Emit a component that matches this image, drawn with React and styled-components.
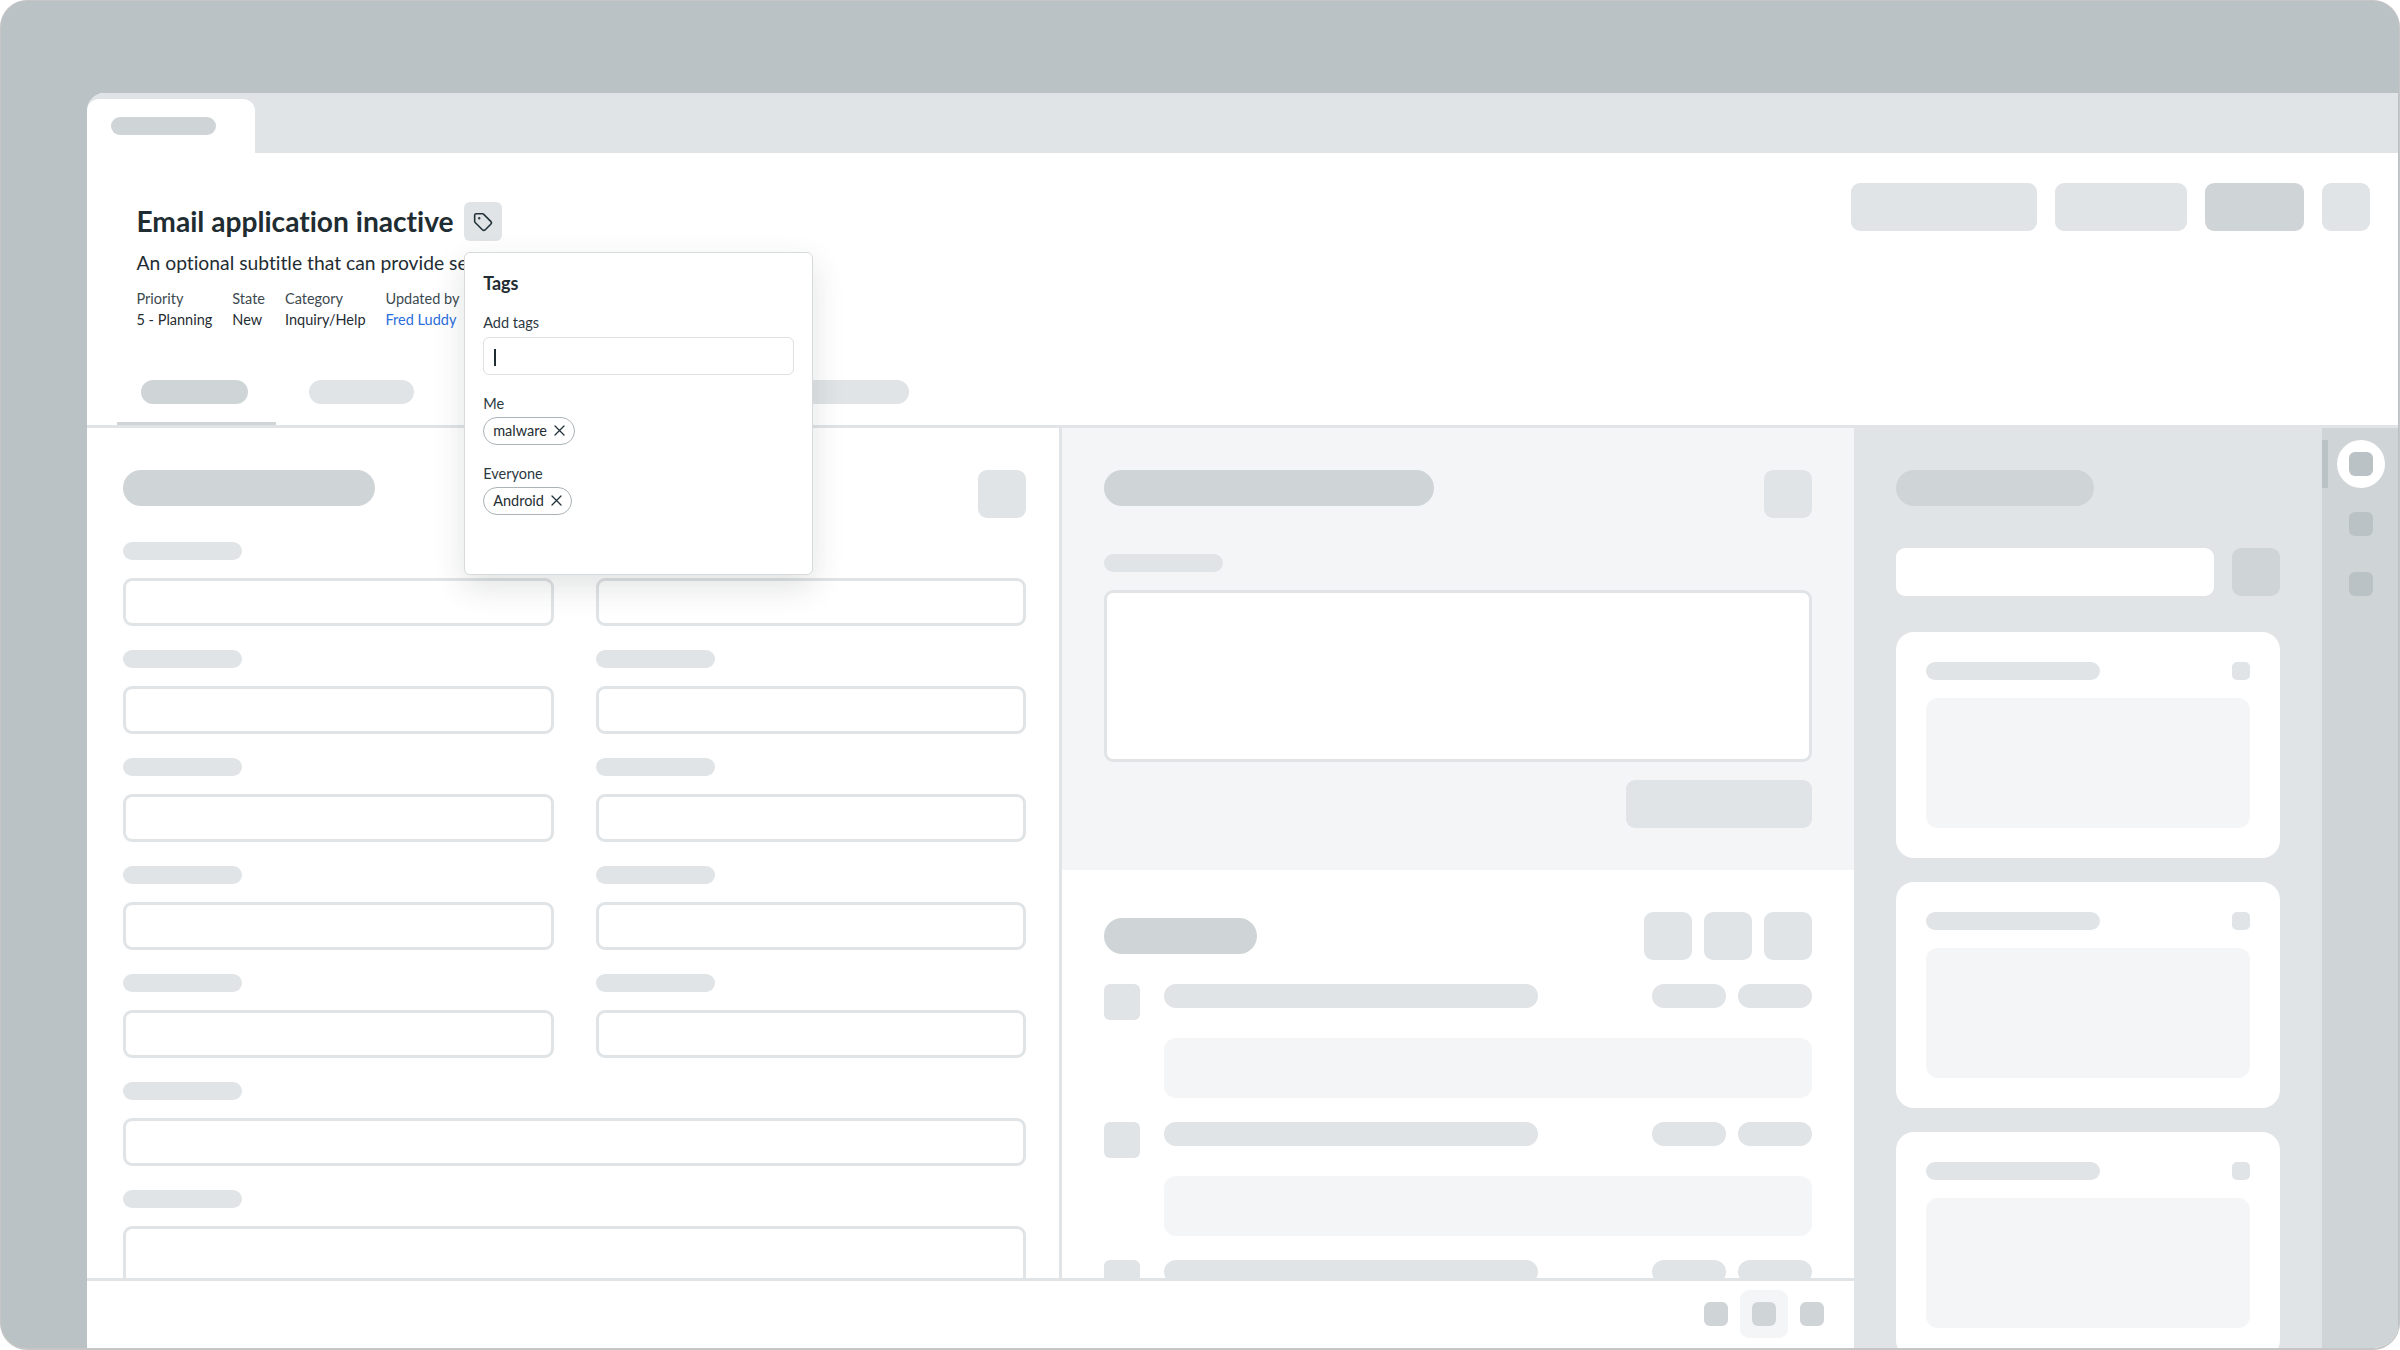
import React from "react";
import styled, { createGlobalStyle } from "styled-components";
import { Tag } from "lucide-react";

const C = { rail: "#cfd4d6", pill: "#cfd4d6", soft: "#e0e4e6", faint: "#f4f5f7", frame: "#bbc2c5", ink: "#1f2d33" };

const Global = createGlobalStyle`
  html, body { margin: 0; padding: 0; background: #fff; }
  * { box-sizing: border-box; }
  body { font-family: "Lato", "Liberation Sans", sans-serif; color: ${C.ink}; font-variant-ligatures: none; }
`;

const Frame = styled.div`
  width: 2400px; height: 1350px; background: ${C.frame};
  border: 1px solid #c6c6c6; border-bottom-width: 2px; border-radius: 27px; overflow: hidden;
  padding: 92px 1px 0 86px; display: flex;
`;
const Window = styled.div`
  flex: 1; min-width: 0; display: flex; flex-direction: column; background: #fff;
  border-top-left-radius: 18px; overflow: hidden;
`;
const TabBar = styled.div`
  height: 60px; flex: none; background: ${C.soft}; padding-top: 6px; display: flex;
`;
const WindowTab = styled.div`
  width: 168px; height: 54px; background: #fff; border-radius: 12px 12px 0 0; padding: 18px 0 0 24px;
`;
const Bar = styled.div`
  width: ${p => p.$w}px; height: ${p => p.$h || 18}px; flex: none;
  border-radius: ${p => (p.$h || 18) / 2}px;
  background: ${p => p.$c || C.soft};
`;
const Block = styled.div`
  width: ${p => (p.$w ? p.$w + "px" : "auto")}; height: ${p => p.$h || 48}px; flex: none;
  border-radius: ${p => p.$r || 9}px; background: ${p => p.$c || C.soft};
`;
const Header = styled.header`
  height: 275px; flex: none; border-bottom: 3px solid ${C.soft}; display: flex; flex-direction: column;
`;
const HeaderTop = styled.div`
  flex: 1; display: flex; justify-content: space-between; padding: 0 28px 0 49.5px;
`;
const Info = styled.div` padding-top: 49px; `;
const TitleRow = styled.div` display: flex; align-items: center; gap: 10.5px; height: 39px; `;
const Title = styled.h1` margin: 0; font-size: 28.15px; line-height: 39px; font-weight: 700; `;
const TagAnchor = styled.div` position: relative; width: 38px; height: 39px; `;
const TagButton = styled.div`
  width: 38px; height: 39px; background: ${C.soft}; border-radius: 6px;
  display: flex; align-items: center; justify-content: center;
`;
const Subtitle = styled.p` margin: 8px 0 0; font-size: 19.3px; line-height: 28px; white-space: nowrap; `;
const Meta = styled.div` display: flex; gap: 20px; margin-top: 12px; font-size: 14.5px; line-height: 20.5px; `;
const MetaLabel = styled.div` color: #3c4a50; `;
const MetaValue = styled.div` color: ${p => (p.$link ? "#2a6ddb" : C.ink)}; `;
const Actions = styled.div` display: flex; gap: 18px; padding-top: 30px; align-items: flex-start; `;
const Tabs = styled.div` height: 45px; flex: none; display: flex; padding-left: 30px; `;
const TabItem = styled.div`
  width: 159px; flex: none; padding-left: 24px; margin-right: ${p => p.$gap || 0}px;
  border-bottom: 3px solid ${p => (p.$active ? C.pill : "transparent")};
  border-radius: 3px 3px 0 0;
`;
const Popover = styled.div`
  position: absolute; top: 50px; left: 0; width: 349px; height: 323px; z-index: 5;
  background: #fff; border: 1.5px solid #d6dadc; border-radius: 6px;
  padding: 18px 18px 0;
  box-shadow: 0 12px 32px rgba(40, 50, 55, 0.14);
`;
const PopTitle = styled.div` font-size: 18px; line-height: 24px; font-weight: 700; `;
const PopLabel = styled.div` font-size: 14.5px; line-height: 20px; margin-top: ${p => p.$mt}px; color: #2c393f; `;
const TagInput = styled.div`
  width: 311px; height: 38px; margin-top: 3.5px; border: 1.5px solid #dde1e3; border-radius: 6px;
  padding: 11px 0 0 10px;
`;
const Caret = styled.div` width: 1.5px; height: 17px; background: ${C.ink}; `;
const Chip = styled.div`
  display: inline-flex; align-items: center; gap: 7px; height: 28px; margin-top: 3px; padding: 0 9px 0 9px;
  border: 1.3px solid #abb3b7; border-radius: 14px; font-size: 14.5px;
`;
const Workspace = styled.div` flex: 1; min-height: 0; display: flex; `;
const Main = styled.div` flex: 1; min-width: 0; display: flex; flex-direction: column; `;
const Panes = styled.div` flex: 1; min-height: 0; display: flex; overflow: hidden; `;
const FormPane = styled.section`
  width: 975px; flex: none; border-right: 3px solid ${C.soft}; padding: 41.5px 33px 0 36px;
`;
const PaneHead = styled.div`
  display: flex; justify-content: space-between; align-items: flex-start; height: 48px;
`;
const FormGrid = styled.div`
  display: grid; grid-template-columns: 1fr 1fr; column-gap: 42px; row-gap: 24px; margin-top: 24.5px;
`;
const Field = styled.div` grid-column: ${p => (p.$wide ? "1 / -1" : "auto")}; `;
const FieldBox = styled.div`
  height: ${p => p.$h || 48}px; margin-top: ${p => p.$mt || 18}px; background: #fff;
  border: 3px solid ${C.soft}; border-radius: 9px;
`;
const RightPane = styled.section` flex: 1; min-width: 0; display: flex; flex-direction: column; `;
const Composer = styled.div` height: 442px; flex: none; background: ${C.faint}; padding: 41.5px 42px 0; `;
const ComposerBody = styled.div` padding-top: 36px; `;
const ComposerFoot = styled.div` display: flex; justify-content: flex-end; margin-top: 18px; `;
const Activity = styled.div` flex: 1; padding: 42px 42px 0; `;
const ActivityHead = styled.div` display: flex; justify-content: space-between; align-items: flex-start; height: 48px; `;
const ActivityButtons = styled.div` display: flex; gap: 12px; `;
const ActivityTitle = styled.div` padding-top: 6px; `;
const Rows = styled.div` display: flex; flex-direction: column; gap: 24px; margin-top: 24px; `;
const Row = styled.div` display: flex; gap: 24px; `;
const RowBody = styled.div` flex: 1; min-width: 0; `;
const RowTop = styled.div` display: flex; justify-content: space-between; `;
const RowPills = styled.div` display: flex; gap: 12px; `;
const RowBlock = styled.div` height: 60px; margin-top: 30px; border-radius: 12px; background: ${C.faint}; `;
const Footer = styled.footer`
  height: 70px; flex: none; border-top: 3px solid ${C.soft}; display: flex; justify-content: flex-end;
  align-items: flex-start; padding: 9px 18px 0 0;
`;
const FooterCell = styled.div`
  width: 48px; height: 48px; border-radius: 9px;
  background: ${p => (p.$on ? C.faint : "transparent")};
  display: flex; align-items: center; justify-content: center;
`;
const Sidebar = styled.aside`
  width: 468px; flex: none; background: ${C.soft}; padding: 41.5px 42px 0; overflow: hidden;
`;
const SearchRow = styled.div` display: flex; gap: 18px; margin-top: 42px; `;
const SearchBox = styled.div` flex: 1; height: 48px; background: #fff; border-radius: 9px; `;
const Cards = styled.div` display: flex; flex-direction: column; gap: 24px; margin-top: 36px; `;
const Card = styled.div`
  height: 226px; flex: none; background: #fff; border-radius: 18px; padding: 30px 30px 0;
`;
const CardHead = styled.div` display: flex; justify-content: space-between; `;
const CardBlock = styled.div` height: 130px; margin-top: 18px; border-radius: 12px; background: ${C.faint}; `;
const Rail = styled.nav`
  width: 76px; flex: none; background: ${C.rail}; padding: 12px 0 0 2px; position: relative;
  display: flex; flex-direction: column; align-items: center;
`;
const RailHandle = styled.div`
  position: absolute; left: 0; top: 12px; width: 6px; height: 48px; background: ${C.frame};
`;
const RailItem = styled.div`
  width: 48px; height: 48px; border-radius: 50%; margin-bottom: 12px;
  background: ${p => (p.$on ? "#fff" : "transparent")};
  display: flex; align-items: center; justify-content: center;
`;

const CloseIcon = () => (
  <svg width="11" height="11" viewBox="0 0 11 11" stroke="#22323a" strokeWidth="1.3" strokeLinecap="round">
    <path d="M1 1 L10 10 M10 1 L1 10" />
  </svg>
);

const metas = [
  ["Priority", "5 - Planning"],
  ["State", "New"],
  ["Category", "Inquiry/Help"],
  ["Updated by", "Fred Luddy", true],
];
const fieldRows = [0, 1, 2, 3, 4];

const ActivityRow = () => (
  <Row>
    <Block $w={36} $h={36} $r={6} />
    <RowBody>
      <RowTop>
        <Bar $w={374} $h={24} />
        <RowPills>
          <Bar $w={74} $h={24} />
          <Bar $w={74} $h={24} />
        </RowPills>
      </RowTop>
      <RowBlock />
    </RowBody>
  </Row>
);

const SideCard = () => (
  <Card>
    <CardHead>
      <Bar $w={174} />
      <Block $w={18} $h={18} $r={5} />
    </CardHead>
    <CardBlock />
  </Card>
);

export default function App() {
  return (
    <>
      <Global />
      <Frame>
        <Window>
          <TabBar>
            <WindowTab><Bar $w={105} $c={C.pill} /></WindowTab>
          </TabBar>
          <Header>
            <HeaderTop>
              <Info>
                <TitleRow>
                  <Title>Email application inactive</Title>
                  <TagAnchor>
                    <TagButton><Tag size={20} strokeWidth={1.9} color="#22323a" /></TagButton>
                    <Popover>
                      <PopTitle>Tags</PopTitle>
                      <PopLabel $mt={18}>Add tags</PopLabel>
                      <TagInput><Caret /></TagInput>
                      <PopLabel $mt={19}>Me</PopLabel>
                      <Chip>malware <CloseIcon /></Chip>
                      <PopLabel $mt={19}>Everyone</PopLabel>
                      <Chip>Android <CloseIcon /></Chip>
                    </Popover>
                  </TagAnchor>
                </TitleRow>
                <Subtitle>An optional subtitle that can provide several details</Subtitle>
                <Meta>
                  {metas.map(([l, v, link]) => (
                    <div key={l}>
                      <MetaLabel>{l}</MetaLabel>
                      <MetaValue $link={link}>{v}</MetaValue>
                    </div>
                  ))}
                </Meta>
              </Info>
              <Actions>
                <Block $w={186} />
                <Block $w={132} />
                <Block $w={99} $c={C.pill} />
                <Block $w={48} />
              </Actions>
            </HeaderTop>
            <Tabs>
              <TabItem $active $gap={9}><Bar $w={107} $h={24} $c={C.pill} /></TabItem>
              <TabItem $gap={9}><Bar $w={105} $h={24} /></TabItem>
              <TabItem $gap={9}><Bar $w={105} $h={24} /></TabItem>
              <TabItem><Bar $w={105} $h={24} /></TabItem>
              <TabItem><Bar $w={105} $h={24} /></TabItem>
            </Tabs>
          </Header>
          <Workspace>
            <Main>
              <Panes>
                <FormPane>
                  <PaneHead>
                    <Bar $w={252} $h={36} $c={C.pill} />
                    <Block $w={48} />
                  </PaneHead>
                  <FormGrid>
                    {fieldRows.map(i => (
                      <React.Fragment key={i}>
                        <Field><Bar $w={119} /><FieldBox /></Field>
                        <Field><Bar $w={119} /><FieldBox /></Field>
                      </React.Fragment>
                    ))}
                    <Field $wide><Bar $w={119} /><FieldBox /></Field>
                    <Field $wide><Bar $w={119} /><FieldBox $h={120} /></Field>
                  </FormGrid>
                </FormPane>
                <RightPane>
                  <Composer>
                    <PaneHead>
                      <Bar $w={330} $h={36} $c={C.pill} />
                      <Block $w={48} />
                    </PaneHead>
                    <ComposerBody>
                      <Bar $w={119} />
                      <FieldBox $h={172} $mt={18.5} />
                      <ComposerFoot><Block $w={186} /></ComposerFoot>
                    </ComposerBody>
                  </Composer>
                  <Activity>
                    <ActivityHead>
                      <ActivityTitle><Bar $w={153} $h={36} $c={C.pill} /></ActivityTitle>
                      <ActivityButtons>
                        <Block $w={48} />
                        <Block $w={48} />
                        <Block $w={48} />
                      </ActivityButtons>
                    </ActivityHead>
                    <Rows>
                      <ActivityRow />
                      <ActivityRow />
                      <ActivityRow />
                    </Rows>
                  </Activity>
                </RightPane>
              </Panes>
              <Footer>
                <FooterCell><Block $w={24} $h={24} $r={6} $c={C.pill} /></FooterCell>
                <FooterCell $on><Block $w={24} $h={24} $r={6} $c={C.pill} /></FooterCell>
                <FooterCell><Block $w={24} $h={24} $r={6} $c={C.pill} /></FooterCell>
              </Footer>
            </Main>
            <Sidebar>
              <Bar $w={198} $h={36} $c={C.pill} />
              <SearchRow>
                <SearchBox />
                <Block $w={48} $c={C.pill} />
              </SearchRow>
              <Cards>
                <SideCard />
                <SideCard />
                <SideCard />
              </Cards>
            </Sidebar>
            <Rail>
              <RailHandle />
              <RailItem $on><Block $w={24} $h={24} $r={6} $c={C.frame} /></RailItem>
              <RailItem><Block $w={24} $h={24} $r={6} $c={C.frame} /></RailItem>
              <RailItem><Block $w={24} $h={24} $r={6} $c={C.frame} /></RailItem>
            </Rail>
          </Workspace>
        </Window>
      </Frame>
    </>
  );
}
